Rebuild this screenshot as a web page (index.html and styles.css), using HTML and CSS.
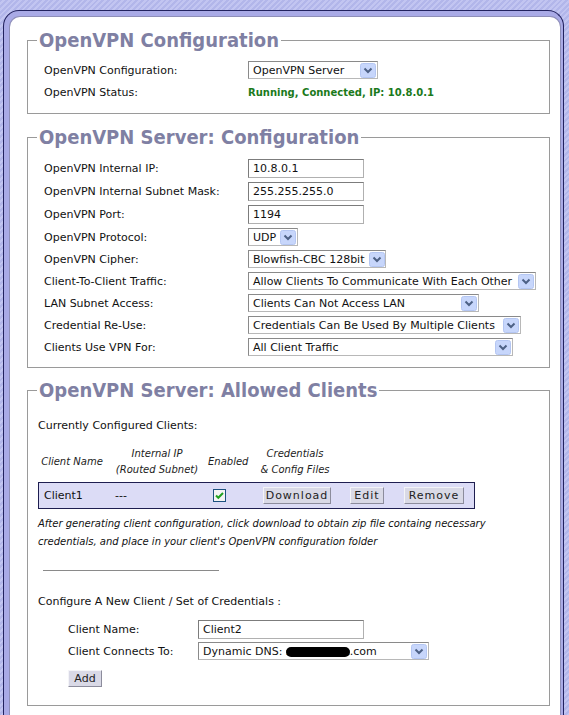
FILE: index.html
```html
<!DOCTYPE html>
<html>
<head>
<meta charset="utf-8">
<link rel="stylesheet" href="styles.css">
</head>
<body>
<div class="frame">
  <div class="page">
    <fieldset class="box box-config">
      <legend>OpenVPN Configuration</legend>
      <div class="form rows-config">
        <div class="lbl">OpenVPN Configuration:</div>
        <div class="ctl"><div class="sel w-mode"><span class="val">OpenVPN Server</span><svg class="arr" width="16" height="15" viewBox="0 0 16 15"><rect x="0.5" y="0.5" width="15" height="14" rx="2" fill="#c7d6fb" stroke="#b4c6f2"/><path d="M4.5 5.5 L8 9 L11.5 5.5" fill="none" stroke="#4d6185" stroke-width="2"/></svg></div></div>
        <div class="lbl">OpenVPN Status:</div>
        <div class="ctl status">Running, Connected, IP: 10.8.0.1</div>
      </div>
    </fieldset>

    <fieldset class="box box-server">
      <legend>OpenVPN Server: Configuration</legend>
      <div class="form rows-server">
        <div class="lbl">OpenVPN Internal IP:</div>
        <div class="ctl"><div class="inp w-ip">10.8.0.1</div></div>
        <div class="lbl">OpenVPN Internal Subnet Mask:</div>
        <div class="ctl"><div class="inp w-ip">255.255.255.0</div></div>
        <div class="lbl">OpenVPN Port:</div>
        <div class="ctl"><div class="inp w-ip">1194</div></div>
        <div class="lbl">OpenVPN Protocol:</div>
        <div class="ctl"><div class="sel w-proto"><span class="val">UDP</span><svg class="arr" width="16" height="15" viewBox="0 0 16 15"><rect x="0.5" y="0.5" width="15" height="14" rx="2" fill="#c7d6fb" stroke="#b4c6f2"/><path d="M4.5 5.5 L8 9 L11.5 5.5" fill="none" stroke="#4d6185" stroke-width="2"/></svg></div></div>
        <div class="lbl">OpenVPN Cipher:</div>
        <div class="ctl"><div class="sel w-cipher"><span class="val">Blowfish-CBC 128bit</span><svg class="arr" width="16" height="15" viewBox="0 0 16 15"><rect x="0.5" y="0.5" width="15" height="14" rx="2" fill="#c7d6fb" stroke="#b4c6f2"/><path d="M4.5 5.5 L8 9 L11.5 5.5" fill="none" stroke="#4d6185" stroke-width="2"/></svg></div></div>
        <div class="lbl">Client-To-Client Traffic:</div>
        <div class="ctl"><div class="sel w-c2c"><span class="val">Allow Clients To Communicate With Each Other</span><svg class="arr" width="16" height="15" viewBox="0 0 16 15"><rect x="0.5" y="0.5" width="15" height="14" rx="2" fill="#c7d6fb" stroke="#b4c6f2"/><path d="M4.5 5.5 L8 9 L11.5 5.5" fill="none" stroke="#4d6185" stroke-width="2"/></svg></div></div>
        <div class="lbl">LAN Subnet Access:</div>
        <div class="ctl"><div class="sel w-lan"><span class="val">Clients Can Not Access LAN</span><svg class="arr" width="16" height="15" viewBox="0 0 16 15"><rect x="0.5" y="0.5" width="15" height="14" rx="2" fill="#c7d6fb" stroke="#b4c6f2"/><path d="M4.5 5.5 L8 9 L11.5 5.5" fill="none" stroke="#4d6185" stroke-width="2"/></svg></div></div>
        <div class="lbl">Credential Re-Use:</div>
        <div class="ctl"><div class="sel w-cred"><span class="val">Credentials Can Be Used By Multiple Clients</span><svg class="arr" width="16" height="15" viewBox="0 0 16 15"><rect x="0.5" y="0.5" width="15" height="14" rx="2" fill="#c7d6fb" stroke="#b4c6f2"/><path d="M4.5 5.5 L8 9 L11.5 5.5" fill="none" stroke="#4d6185" stroke-width="2"/></svg></div></div>
        <div class="lbl">Clients Use VPN For:</div>
        <div class="ctl"><div class="sel w-use"><span class="val">All Client Traffic</span><svg class="arr" width="16" height="15" viewBox="0 0 16 15"><rect x="0.5" y="0.5" width="15" height="14" rx="2" fill="#c7d6fb" stroke="#b4c6f2"/><path d="M4.5 5.5 L8 9 L11.5 5.5" fill="none" stroke="#4d6185" stroke-width="2"/></svg></div></div>
      </div>
    </fieldset>

    <fieldset class="box box-clients">
      <legend>OpenVPN Server: Allowed Clients</legend>
      <div class="current">Currently Configured Clients:</div>
      <div class="thead">
        <div class="th th-name">Client Name</div>
        <div class="th th-ip">Internal IP<br>(Routed Subnet)</div>
        <div class="th th-en">Enabled</div>
        <div class="th th-cred">Credentials<br>&amp; Config Files</div>
      </div>
      <div class="crow">
        <div class="td td-name">Client1</div>
        <div class="td td-ip">---</div>
        <div class="td td-en"><svg width="13" height="13" viewBox="0 0 13 13"><rect x="0.5" y="0.5" width="12" height="12" fill="#f4f4f4" stroke="#1c5180"/><path d="M3 6.5 L5.3 8.8 L10 4" fill="none" stroke="#21a121" stroke-width="2"/></svg></div>
        <div class="td td-btns">
          <span class="btn b-dl">Download</span>
          <span class="btn b-edit">Edit</span>
          <span class="btn b-rm">Remove</span>
        </div>
      </div>
      <div class="note">After generating client configuration, click download to obtain zip file containg necessary credentials, and place in your client's OpenVPN configuration folder</div>
      <div class="sep"></div>
      <div class="configure">Configure A New Client / Set of Credentials :</div>
      <div class="newform">
        <div class="lbl">Client Name:</div>
        <div class="ctl"><div class="inp w-name">Client2</div></div>
        <div class="lbl">Client Connects To:</div>
        <div class="ctl"><div class="sel w-dns"><span class="val">Dynamic DNS: <span class="redact">xxxxxxxxxxxx</span>.com</span><svg class="arr" width="16" height="15" viewBox="0 0 16 15"><rect x="0.5" y="0.5" width="15" height="14" rx="2" fill="#c7d6fb" stroke="#b4c6f2"/><path d="M4.5 5.5 L8 9 L11.5 5.5" fill="none" stroke="#4d6185" stroke-width="2"/></svg></div></div>
      </div>
      <div class="addrow"><span class="btn b-add">Add</span></div>
    </fieldset>
  </div>
</div>
</body>
</html>
```

FILE: styles.css
```css
html, body {
  margin: 0;
  padding: 0;
  height: 715px;
  overflow: hidden;
}
body {
  background: repeating-linear-gradient(135deg, #b2b6ea 0 2px, #c2c5f1 2px 4px);
  font-family: "DejaVu Sans", Verdana, sans-serif;
  font-size: 11px;
  color: #111;
}
.frame {
  margin: 10px 5px 0 3px;
  height: 720px;
  border: 1px solid #22225e;
  border-bottom: none;
  border-radius: 16px 16px 0 0;
  background: #a9aae6;
  padding: 5px 2px 0 5px;
  box-sizing: border-box;
}
.page {
  height: 100%;
  background: #fff;
  border: 1px solid #8e8eb8;
  border-bottom: none;
  border-radius: 11px 11px 0 0;
  box-sizing: border-box;
  padding: 0 10px 0 17px;
  overflow: hidden;
}
.box {
  margin: 0;
  border: 1px solid #9a9a9a;
  padding: 0 10px 10px 16px;
  min-width: 0;
}
.box legend {
  font-family: "DejaVu Sans Condensed", "DejaVu Sans", Verdana, sans-serif;
  font-weight: bold;
  font-size: 20px;
  line-height: 24px;
  color: #7f80a3;
  padding: 0 2px;
  margin-left: -7px;
}
.box-config { margin-top: 11px; padding-top: 7px; }
.box-server { margin-top: 11px; padding-top: 8px; padding-bottom: 9px; }
.box-clients { margin-top: 10px; padding-left: 10px; padding-bottom: 18px; }
.box-clients legend { margin-left: -1px; }

.form {
  display: grid;
  grid-template-columns: 204px 1fr;
  align-items: center;
}
.rows-config { grid-template-rows: 22px 22px; }
.rows-server { grid-template-rows: 23px 23px 23px repeat(6, 22px); }

.lbl { white-space: nowrap; }
.ctl { display: flex; align-items: center; }

.status {
  color: #1b7a1b;
  font-weight: bold;
  font-size: 10px;
}

.inp {
  height: 19px;
  box-sizing: border-box;
  border: 1px solid #7c7c7c;
  border-right-color: #b0b0b0;
  border-bottom-color: #b0b0b0;
  padding: 0 4px;
  line-height: 17px;
  background: #fff;
  white-space: nowrap;
}
.sel {
  display: flex;
  align-items: center;
  height: 18px;
  box-sizing: border-box;
  border: 1px solid #8a8a8a;
  border-right-color: #b8b8b8;
  border-bottom-color: #b8b8b8;
  padding: 0 1px 0 4px;
  background: #fff;
  white-space: nowrap;
}
.sel .val { flex: 1; }
.sel .arr { display: block; flex: none; margin-left: 4px; }

.w-ip { width: 116px; }
.w-mode { width: 130px; }
.w-proto { width: 50px; }
.w-cipher { width: 138px; }
.w-c2c { width: 288px; }
.w-lan { width: 231px; }
.w-cred { width: 273px; }
.w-use { width: 265px; }
.w-name { width: 166px; }
.w-dns { width: 231px; }

.current {
  margin-top: 15px;
  line-height: 18px;
}
.thead {
  margin-top: 11px;
  display: flex;
  align-items: center;
  font-style: italic;
  font-size: 10px;
  line-height: 16px;
  color: #222;
}
.th { text-align: center; }
.th-name { width: 68px; }
.th-ip { width: 102px; }
.th-en { width: 40px; }
.th-cred { width: 94px; }

.crow {
  margin-top: 4px;
  width: 437px;
  height: 27px;
  box-sizing: border-box;
  border: 1px solid #1e1e50;
  background: #dcdcf6;
  display: flex;
  align-items: center;
  padding-left: 5px;
}
.td-name { width: 71px; }
.td-ip { width: 98px; }
.td-en { width: 50px; display: flex; }
.td-en svg { display: block; }
.td-btns { display: flex; align-items: center; }

.btn {
  display: inline-block;
  box-sizing: border-box;
  height: 17px;
  line-height: 15px;
  text-align: center;
  background: #d9d9e6;
  border: 1px solid;
  border-color: #f4f4f8 #8c8c9c #8c8c9c #f4f4f8;
  letter-spacing: 1px;
  color: #222;
}
.b-dl { width: 68px; }
.b-edit { width: 34px; margin-left: 19px; }
.b-rm { width: 60px; margin-left: 20px; }
.b-add { width: 34px; letter-spacing: 0; }

.note {
  margin-top: 6px;
  font-style: italic;
  font-size: 10px;
  line-height: 18px;
  width: 470px;
}
.sep {
  margin: 19px 0 0 5px;
  width: 176px;
  border-top: 1px solid #8a8a8a;
}
.configure {
  margin-top: 22px;
  line-height: 18px;
}
.newform {
  margin-top: 7px;
  padding-left: 30px;
  display: grid;
  grid-template-columns: 130px 1fr;
  grid-template-rows: 22px 22px;
  align-items: center;
}
.redact {
  background: #000;
  color: #000;
  border-radius: 5px;
  font-size: 9px;
}
.addrow {
  margin-top: 8px;
  padding-left: 30px;
  display: flex;
}
```
